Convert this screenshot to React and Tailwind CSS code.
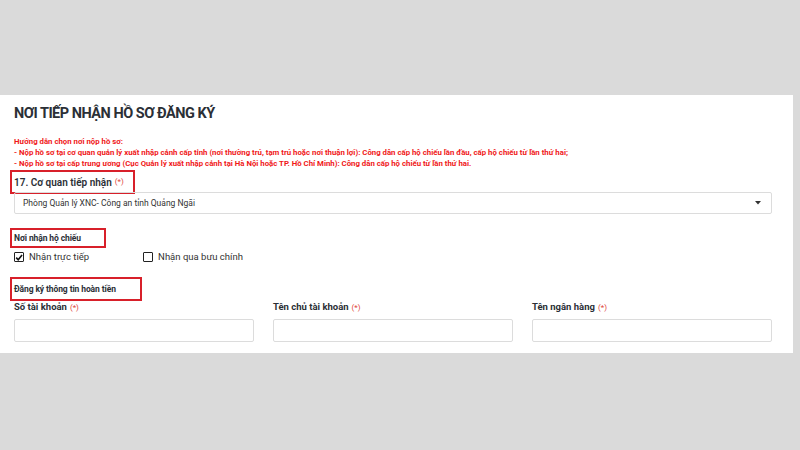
import React from "react";

function Req() {
  return <span className="text-[8px] text-[#e0443a] font-normal ml-[3px]">(*)</span>;
}

export default function App() {
  return (
    <div
      className="w-[800px] h-[450px] bg-[#dadada] pt-[95px]"
      style={{ fontFamily: "Roboto, 'Liberation Sans', sans-serif" }}
    >
      <div className="w-[793px] h-[258px] bg-white pl-[14px] pr-[21px] pt-[9px]">
        <h1 className="text-[14.5px] leading-[20px] font-bold text-[#2b2f36] tracking-[-0.5px] whitespace-nowrap">
          NƠI TIẾP NHẬN HỒ SƠ ĐĂNG KÝ
        </h1>
        <div className="mt-[12px] text-[7.8px] leading-[11px] font-bold text-[#f01818] whitespace-nowrap">
          <div>Hướng dẫn chọn nơi nộp hồ sơ:</div>
          <div>
            - Nộp hồ sơ tại cơ quan quản lý xuất nhập cảnh cấp tỉnh (nơi thường trú, tạm trú hoặc nơi thuận lợi): Công dân cấp hộ chiếu lần đầu, cấp hộ chiếu từ lần thứ hai;
          </div>
          <div>
            - Nộp hồ sơ tại cấp trung ương (Cục Quản lý xuất nhập cảnh tại Hà Nội hoặc TP. Hồ Chí Minh): Công dân cấp hộ chiếu từ lần thứ hai.
          </div>
        </div>
        <div className="ml-[-4px] mt-[1px] w-[125px] h-[24px] border-2 border-[#d8202a] flex items-center pl-[2px] whitespace-nowrap">
          <span className="text-[10px] font-semibold text-[#2b2f36]">17. Cơ quan tiếp nhận</span>
          <Req />
        </div>
        <div className="-mt-[2px] h-[22px] border border-[#dcdcdc] rounded-[2px] flex items-center justify-between pl-[8px] pr-[10px]">
          <span className="text-[8.5px] text-[#333]">Phòng Quản lý XNC- Công an tỉnh Quảng Ngãi</span>
          <svg width="6" height="4" viewBox="0 0 6 4">
            <path d="M0 0 L6 0 L3 3.5 Z" fill="#333" />
          </svg>
        </div>
        <div className="ml-[-4px] mt-[14px] w-[96px] h-[20px] border-2 border-[#d8202a] flex items-center pl-[2px] whitespace-nowrap">
          <span className="text-[8.5px] font-bold text-[#2b2f36] tracking-[-0.1px]">Nơi nhận hộ chiếu</span>
        </div>
        <div className="mt-[3px] flex items-center h-[12px] text-[9.5px] text-[#333]">
          <div className="flex items-center">
            <div className="w-[10px] h-[10px] border border-[#222] rounded-[1px] flex items-center justify-center">
              <svg width="9" height="9" viewBox="0 0 10 10">
                <path d="M1.5 5.2 L4 7.8 L8.8 1.8" stroke="#111" strokeWidth="2" fill="none" />
              </svg>
            </div>
            <span className="ml-[5px]">Nhận trực tiếp</span>
          </div>
          <div className="flex items-center ml-[54px]">
            <div className="w-[10px] h-[10px] border border-[#222] rounded-[1px]" />
            <span className="ml-[5px]">Nhận qua bưu chính</span>
          </div>
        </div>
        <div className="ml-[-4px] mt-[14px] w-[132px] h-[24px] border-2 border-[#d8202a] flex items-center pl-[2px] whitespace-nowrap">
          <span className="text-[8.5px] font-bold text-[#2b2f36] tracking-[-0.1px]">Đăng ký thông tin hoàn tiền</span>
        </div>
        <div className="grid grid-cols-3 gap-x-[19px]">
          {["Số tài khoản", "Tên chủ tài khoản", "Tên ngân hàng"].map((l) => (
            <div key={l}>
              <div className="h-[13px] flex items-center text-[9.5px] font-bold text-[#2b2f36] whitespace-nowrap">
                {l}
                <Req />
              </div>
              <div className="mt-[5px] h-[23px] border border-[#dcdcdc] rounded-[2px]" />
            </div>
          ))}
        </div>
      </div>
    </div>
  );
}
